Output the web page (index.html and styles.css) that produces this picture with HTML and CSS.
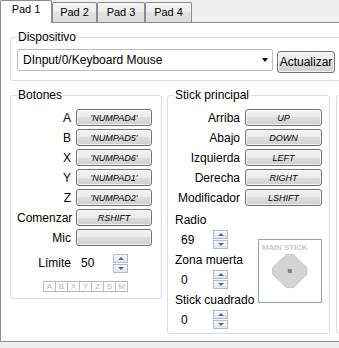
FILE: index.html
```html
<!DOCTYPE html>
<html lang="es">
<head>
    <meta charset="UTF-8">
    <meta name="viewport" content="width=device-width, initial-scale=1.0">
    <title>Pad 1</title>
    <link rel="stylesheet" href="styles.css">
</head>
<body>
    <div class="tabs">
        <div class="tab active">Pad 1</div>
        <div class="tab tab-2">Pad 2</div>
        <div class="tab tab-3">Pad 3</div>
        <div class="tab tab-4">Pad 4</div>
    </div>

    <div class="panel">
        <fieldset class="group device">
            <legend>Dispositivo</legend>
            <div class="device-row">
                <div class="combo">
                    <span>DInput/0/Keyboard Mouse</span>
                    <span class="combo-arrow"></span>
                </div>
                <button class="btn refresh">Actualizar</button>
            </div>
        </fieldset>

        <div class="columns">
            <fieldset class="group buttons">
                <legend>Botones</legend>
                <div class="buttons-inner">
                    <div class="bind-grid">
                        <span class="bind-label">A</span><button class="btn key">'NUMPAD4'</button>
                        <span class="bind-label">B</span><button class="btn key">'NUMPAD5'</button>
                        <span class="bind-label">X</span><button class="btn key">'NUMPAD6'</button>
                        <span class="bind-label">Y</span><button class="btn key">'NUMPAD1'</button>
                        <span class="bind-label">Z</span><button class="btn key">'NUMPAD2'</button>
                        <span class="bind-label">Comenzar</span><button class="btn key">RSHIFT</button>
                        <span class="bind-label">Mic</span><button class="btn key"></button>
                        <span class="bind-label limit">Límite</span>
                        <div class="value-row limit">
                            <span class="num num-limit">50</span>
                            <div class="spin"><span class="spin-up"></span><span class="spin-down"></span></div>
                        </div>
                    </div>
                    <div class="state-boxes">
                        <span>A</span><span>B</span><span>X</span><span>Y</span><span>Z</span><span>S</span><span>M</span>
                    </div>
                </div>
            </fieldset>

            <fieldset class="group stick">
                <legend>Stick principal</legend>
                <div class="stick-inner">
                    <div class="bind-grid stick-grid">
                        <span class="bind-label">Arriba</span><button class="btn key">UP</button>
                        <span class="bind-label">Abajo</span><button class="btn key">DOWN</button>
                        <span class="bind-label">Izquierda</span><button class="btn key">LEFT</button>
                        <span class="bind-label">Derecha</span><button class="btn key">RIGHT</button>
                        <span class="bind-label">Modificador</span><button class="btn key">LSHIFT</button>
                    </div>
                    <div class="stick-lower">
                        <div class="stick-fields">
                            <div class="field-label">Radio</div>
                            <div class="value-row field-value">
                                <span class="num">69</span>
                                <div class="spin"><span class="spin-up"></span><span class="spin-down"></span></div>
                            </div>
                            <div class="field-label">Zona muerta</div>
                            <div class="value-row field-value">
                                <span class="num">0</span>
                                <div class="spin"><span class="spin-up"></span><span class="spin-down"></span></div>
                            </div>
                            <div class="field-label">Stick cuadrado</div>
                            <div class="value-row field-value">
                                <span class="num">0</span>
                                <div class="spin"><span class="spin-up"></span><span class="spin-down"></span></div>
                            </div>
                        </div>
                        <svg class="stick-map" width="63" height="62" viewBox="0 0 63 62">
                            <text x="3" y="9.5" class="stick-map-title">MAIN STICK</text>
                            <polygon points="28,14 35,14 49,27.5 49,34.5 35,48 28,48 14,34.5 14,27.5" fill="#d3d3d3" stroke="#c6c6c6" stroke-width="1"/>
                            <rect x="29.5" y="29" width="4" height="4" fill="#7f7f7f"/>
                        </svg>
                    </div>
                </div>
            </fieldset>

            <div class="group cstick"></div>
        </div>
    </div>
</body>
</html>
```

FILE: styles.css
```css
html, body {
    overflow: hidden;
}
body {
    margin: 0;
    font-family: "Liberation Sans", Arial, sans-serif;
    font-size: 12px;
    color: #000;
    background-color: #f0f0f0;
}
.tabs {
    display: flex;
    align-items: flex-end;
    height: 22px;
}
.tab {
    box-sizing: border-box;
    height: 20px;
    border: 1px solid #898c95;
    border-bottom: none;
    border-radius: 2px 2px 0 0;
    background: linear-gradient(#f5f5f5, #ececec 50%, #e2e2e2 50%, #dcdcdc);
    font-size: 11px;
    line-height: 18px;
    text-align: center;
}
.tab.active {
    position: relative;
    z-index: 1;
    width: 52px;
    height: 23px;
    margin-bottom: -1px;
    background: #fff;
    line-height: 17px;
}
.tab-2 {
    width: 45px;
}
.tab-3 {
    width: 48px;
}
.tab-4 {
    width: 47px;
}
.panel {
    width: 540px;
    height: 320px;
    box-sizing: border-box;
    padding: 7px 0 0 9px;
    background: #fff;
    border: 1px solid #898c95;
    border-right: none;
}
.group {
    margin: 0;
    padding: 0;
    min-width: 0;
    border: 1px solid #d5dfe5;
    border-radius: 3px;
}
.group legend {
    margin-left: 6px;
    padding: 0 1px;
    line-height: 14px;
}
.device-row {
    display: flex;
    align-items: flex-start;
    gap: 4px;
    padding: 5px 0 7px 6px;
}
.combo {
    box-sizing: border-box;
    width: 256px;
    height: 22px;
    display: flex;
    align-items: center;
    justify-content: space-between;
    padding: 0 4px 0 5px;
    border: 1px solid #b9bcc2;
    border-radius: 2px;
    background: #fff;
}
.combo-arrow {
    width: 0;
    height: 0;
    border-left: 3.5px solid transparent;
    border-right: 3.5px solid transparent;
    border-top: 4px solid #000;
}
.btn {
    box-sizing: border-box;
    padding: 0;
    font-family: inherit;
    color: #000;
    border: 1px solid #707070;
    border-radius: 3px;
    background: linear-gradient(#f2f2f2, #ebebeb 50%, #dddddd 50%, #cfcfcf);
    box-shadow: inset 0 0 0 1px rgba(255, 255, 255, 0.7);
}
.refresh {
    width: 58px;
    height: 22px;
    margin-top: 2px;
    font-size: 12px;
}
.columns {
    display: flex;
    align-items: flex-start;
    margin-top: 7px;
}
.buttons {
    width: 152px;
    box-sizing: border-box;
}
.buttons-inner {
    padding: 7px 9px 6px 6px;
}
.bind-grid {
    display: grid;
    grid-template-columns: 54px 76px;
    column-gap: 5px;
    row-gap: 3px;
    align-items: center;
}
.bind-label {
    text-align: right;
    white-space: nowrap;
}
.key {
    height: 17px;
    font-size: 9px;
    font-style: italic;
}
.limit {
    margin-top: 4px;
}
.value-row {
    display: flex;
    align-items: center;
    height: 20px;
}
.num {
    box-sizing: border-box;
    width: 38px;
    padding-left: 6px;
}
.num-limit {
    width: 37px;
    padding-left: 5px;
}
.spin {
    display: flex;
    flex-direction: column;
    gap: 1px;
}
.spin span {
    box-sizing: border-box;
    width: 15px;
    height: 9px;
    display: flex;
    align-items: center;
    justify-content: center;
    border: 1px solid #b3bac4;
    background: linear-gradient(#f6f7f9, #e4e8ec);
}
.spin-up::after,
.spin-down::after {
    content: "";
    width: 0;
    height: 0;
    border-left: 3px solid transparent;
    border-right: 3px solid transparent;
}
.spin-up::after {
    border-bottom: 3px solid #4b69a8;
}
.spin-down::after {
    border-top: 3px solid #4b69a8;
}
.state-boxes {
    display: flex;
    margin: 8px 0 0 26px;
}
.state-boxes span {
    box-sizing: border-box;
    width: 13px;
    height: 11px;
    margin-right: -1px;
    border: 1px solid #a9bdd2;
    font-size: 8px;
    line-height: 9px;
    text-align: center;
    color: #b4b4b4;
}
.stick {
    width: 163px;
    box-sizing: border-box;
    margin-left: 5px;
}
.stick-inner {
    padding: 7px 7px 0 7px;
}
.stick-grid {
    grid-template-columns: 64px 77px;
    margin-left: 1px;
}
.stick-lower {
    display: flex;
    align-items: flex-start;
    gap: 4px;
    margin-top: 7px;
}
.stick-fields {
    width: 80px;
    white-space: nowrap;
}
.field-label {
    line-height: 14px;
}
.field-value {
    height: 19px;
    margin: 3px 0 4px;
}
.stick-map {
    display: block;
    margin-top: 26px;
    border: 1px solid #8ea4ba;
    background: #fff;
}
.stick-map-title {
    font-family: "Liberation Sans", Arial, sans-serif;
    font-size: 8px;
    font-weight: bold;
    fill: #c6c6c6;
}
.cstick {
    align-self: stretch;
    width: 160px;
    margin: 7px 0 0 6px;
}
```
